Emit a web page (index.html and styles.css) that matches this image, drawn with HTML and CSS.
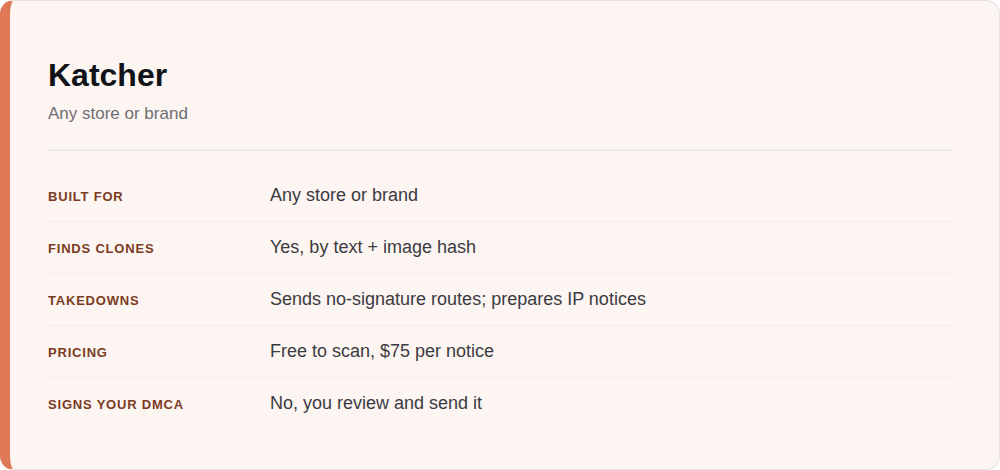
FILE: index.html
```html
<!DOCTYPE html>
<html lang="en">
<head>
<meta charset="utf-8">
<title>Katcher</title>
<link rel="stylesheet" href="styles.css">
</head>
<body>
<section class="card">
  <header class="card-head">
    <h1 class="title">Katcher</h1>
    <p class="subtitle">Any store or brand</p>
  </header>
  <dl class="facts">
    <div class="row"><dt class="label">Built for</dt><dd class="value">Any store or brand</dd></div>
    <div class="row"><dt class="label">Finds clones</dt><dd class="value">Yes, by text + image hash</dd></div>
    <div class="row"><dt class="label">Takedowns</dt><dd class="value">Sends no-signature routes; prepares IP notices</dd></div>
    <div class="row"><dt class="label">Pricing</dt><dd class="value">Free to scan, $75 per notice</dd></div>
    <div class="row"><dt class="label">Signs your DMCA</dt><dd class="value">No, you review and send it</dd></div>
  </dl>
</section>
</body>
</html>
```
FILE: styles.css
```css
html, body {
  margin: 0;
  padding: 0;
  background: #ffffff;
}
body {
  font-family: "Liberation Sans", Arial, sans-serif;
}
.card {
  box-sizing: border-box;
  width: 1000px;
  height: 470px;
  background: #fdf5f2;
  border: 1px solid #e6e3e1;
  border-left: 10px solid #df7857;
  border-radius: 14px;
  padding: 55px 47px 0 38px;
}
.card-head {
  padding-bottom: 25px;
  border-bottom: 2px solid #ece9e7;
}
.title {
  margin: 0;
  font-size: 32px;
  line-height: 38px;
  font-weight: 700;
  color: #111318;
}
.subtitle {
  margin: 10px 0 0;
  font-size: 17px;
  line-height: 20px;
  color: #6e6e72;
}
.facts {
  margin: 18.5px 0 0;
}
.row {
  display: grid;
  grid-template-columns: 222px 1fr;
  align-items: baseline;
  padding: 13px 0;
  border-bottom: 1px solid #f4ece9;
}
.row:last-child {
  border-bottom: none;
}
.label {
  margin: 0;
  font-size: 13px;
  line-height: 21px;
  font-weight: 700;
  text-transform: uppercase;
  letter-spacing: 0.8px;
  color: #7b3b22;
}
.value {
  margin: 0;
  font-size: 18px;
  line-height: 25.2px;
  color: #3b3b42;
}
```
